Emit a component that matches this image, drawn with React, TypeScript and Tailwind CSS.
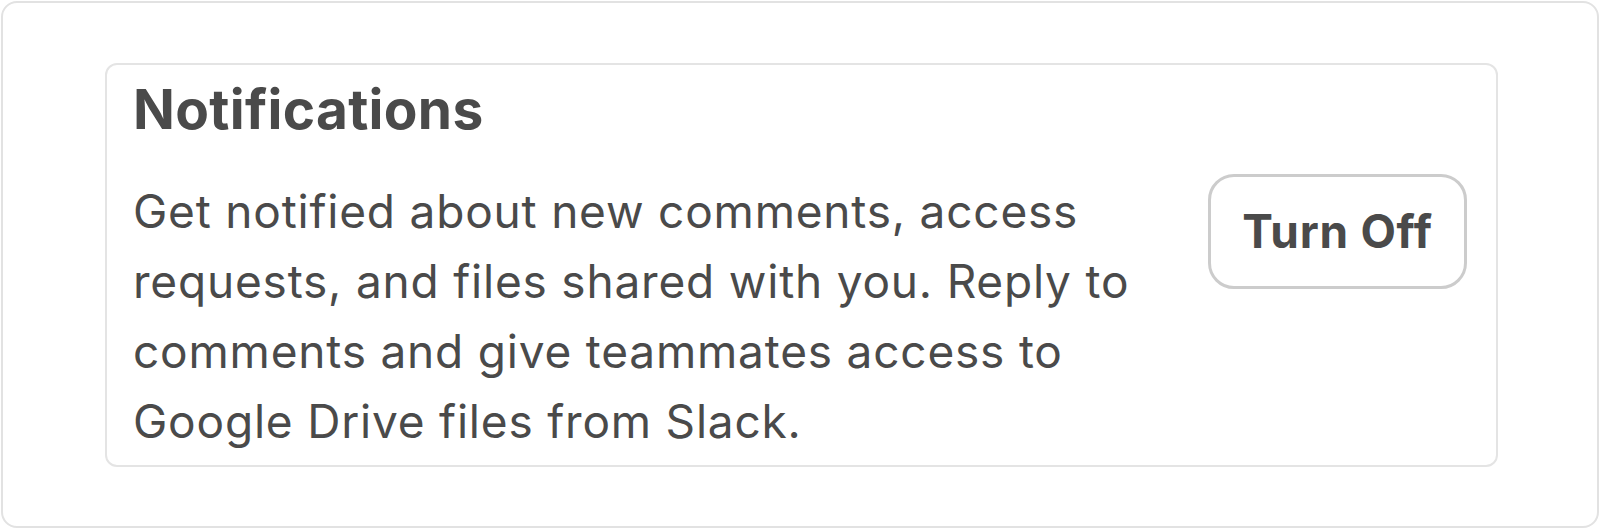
const NotificationsCard = () => {
  return (
    <div className="rounded-[12px] border-2 border-[#e4e4e4] bg-white pl-[26px] pr-[29px] pt-[11px] pb-[9px]">
      {/* Header */}
      <h2 className="text-[55px] leading-[66px] font-bold tracking-[0.3px] text-[#4a4a4a]">
        Notifications
      </h2>
      {/* Body */}
      <div className="mt-[34px] flex items-start justify-between">
        <p className="w-[1040px] text-[46px] leading-[70px] tracking-[0.8px] text-[#4a4a4a]">
          Get notified about new comments, access requests, and files shared
          with you. Reply to comments and give teammates access to Google Drive
          files from Slack.
        </p>
        <button className="-mt-[2px] h-[115px] w-[259px] rounded-[26px] border-[3px] border-[#cccccc] bg-white text-[46px] font-bold tracking-[0.7px] text-[#4a4a4a]">
          Turn Off
        </button>
      </div>
    </div>
  );
};

const App = () => {
  return (
    <div className="h-[529px] w-[1600px] bg-white p-px font-['Inter',sans-serif]">
      <div className="h-full rounded-[16px] border-2 border-[#e2e2e2] pl-[102px] pr-[99px] pt-[60px]">
        <NotificationsCard />
      </div>
    </div>
  );
};

export default App;
